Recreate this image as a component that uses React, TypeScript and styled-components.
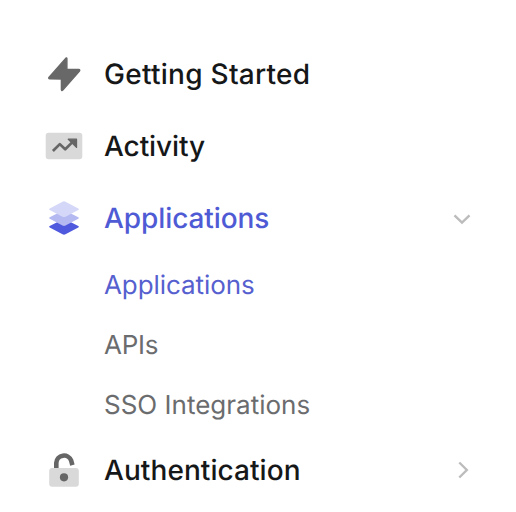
import React from "react";
import styled, { createGlobalStyle } from "styled-components";

const GlobalStyle = createGlobalStyle`
  * { box-sizing: border-box; }
  body {
    margin: 0;
    background: #fff;
    font-family: Inter, "Liberation Sans", sans-serif;
    text-rendering: geometricPrecision;
  }
`;

const Sidebar = styled.nav`
  width: 516px;
  height: 512px;
  padding: 38px 34px 0 44px;
  overflow: hidden;
  background: #fff;
`;

const NavItem = styled.div<{ $active?: boolean }>`
  display: flex;
  align-items: center;
  height: 72px;
  color: ${(p) => (p.$active ? "#4f5bd5" : "#161718")};
  font-size: 28px;
  font-weight: 500;
  line-height: 40px;
`;

const NavIcon = styled.svg`
  flex: none;
  width: 40px;
  height: 40px;
  margin-right: 20px;
`;

const Label = styled.span<{ $spacing?: number }>`
  flex: 1;
  white-space: nowrap;
  letter-spacing: ${(p) => p.$spacing ?? 0}px;
`;

const Chevron = styled.svg`
  flex: none;
  width: 40px;
  height: 40px;
  fill: none;
  stroke: #bcbcbc;
  stroke-width: 2.4;
`;

const SubList = styled.div`
  height: 180px;
  padding: 1px 0 0 60px;
`;

const SubItem = styled.div<{ $active?: boolean }>`
  display: flex;
  align-items: center;
  height: 60px;
  color: ${(p) => (p.$active ? "#5660cf" : "#6b6c6e")};
  font-size: 26px;
  font-weight: 400;
`;

const BoltIcon = () => (
  <NavIcon viewBox="0 0 40 40">
    <path
      d="M21.9 4.1 4.9 23.4q-.6 1.2.9 1.5l11.6.2v10.6q.3 1.4 1.4.4L35.5 17q.8-1.3-.8-1.6H22.9V4.6q-.1-1-1-.5Z"
      fill="#686868"
      stroke="#686868"
      strokeWidth="1.4"
      strokeLinejoin="round"
    />
  </NavIcon>
);

const ActivityIcon = () => (
  <NavIcon viewBox="0 0 40 40">
    <rect x="1.7" y="6.7" width="36.6" height="26.5" rx="3" fill="#d9d9d9" />
    <path d="m8.9 25 6.9-6.9 5.4 5.2 8-7.9" fill="none" stroke="#666" strokeWidth="2.7" strokeLinejoin="round" />
    <path d="M24.3 13.2h8.2v8.2Z" fill="#666" stroke="#666" strokeWidth="1.3" strokeLinejoin="round" />
  </NavIcon>
);

const LayersIcon = () => (
  <NavIcon viewBox="0 0 40 40">
    <path d="m5.7 28 14.3-7.3L34.3 28q1.3.7 0 1.5l-12.8 6.8q-1.5.8-3 0L5.7 29.5q-1.3-.8 0-1.5Z" fill="#4f59de" />
    <path d="m5.7 19.3 14.3-7.3 14.3 7.3q1.3.7 0 1.5l-12.8 6.8q-1.5.8-3 0L5.7 20.8q-1.3-.8 0-1.5Z" fill="#b5b9f1" />
    <path d="m5.7 10.4 12.8-6.7q1.5-.8 3 0l12.8 6.7q1.3.7 0 1.5l-12.8 6.8q-1.5.8-3 0L5.7 11.9q-1.3-.8 0-1.5Z" fill="#d5d7f8" />
  </NavIcon>
);

const UnlockIcon = () => (
  <NavIcon viewBox="0 0 40 40">
    <path d="M12.3 19v-6.1a7.7 7.7 0 0 1 14.9-2.3l1.2 4.6" fill="none" stroke="#666" strokeWidth="4.6" />
    <rect x="5.2" y="18" width="29.6" height="18.7" rx="3" fill="#d9d9d9" />
    <circle cx="20" cy="27.3" r="4.1" fill="#666" />
  </NavIcon>
);

export default function App() {
  return (
    <>
      <GlobalStyle />
      <Sidebar>
        <NavItem>
          <BoltIcon />
          <Label $spacing={0.27}>Getting Started</Label>
        </NavItem>
        <NavItem>
          <ActivityIcon />
          <Label $spacing={-0.08}>Activity</Label>
        </NavItem>
        <NavItem $active>
          <LayersIcon />
          <Label $spacing={-0.08}>Applications</Label>
          <Chevron viewBox="0 0 40 40">
            <path d="m12.5 17.3 7.5 7.3 7.5-7.3" />
          </Chevron>
        </NavItem>
        <SubList>
          <SubItem $active><Label $spacing={-0.08}>Applications</Label></SubItem>
          <SubItem><Label $spacing={-0.3}>APIs</Label></SubItem>
          <SubItem><Label>SSO Integrations</Label></SubItem>
        </SubList>
        <NavItem>
          <UnlockIcon />
          <Label $spacing={0.07}>Authentication</Label>
          <Chevron viewBox="0 0 40 40">
            <path d="m17.3 12.5 7.5 7.5-7.5 7.5" />
          </Chevron>
        </NavItem>
      </Sidebar>
    </>
  );
}
